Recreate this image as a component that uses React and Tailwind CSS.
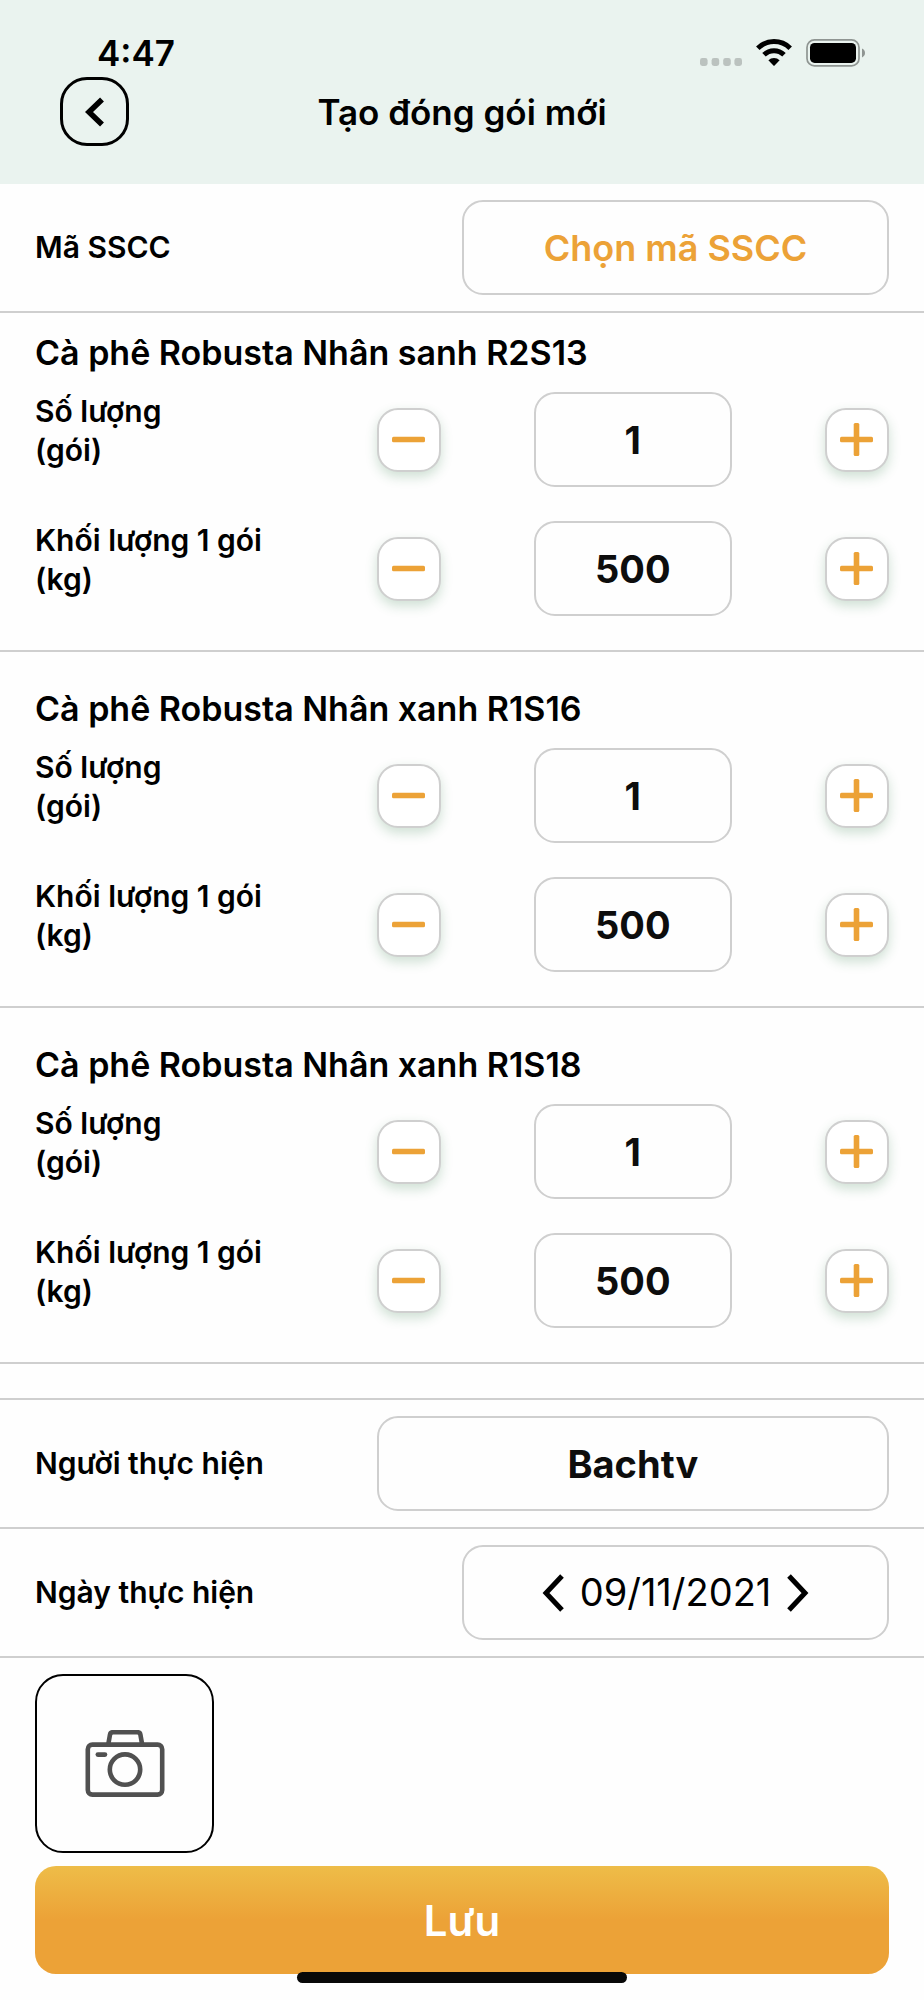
import React, { useState } from "react";

const initialProducts = [
  { id: 1, name: "Cà phê Robusta Nhân sanh R2S13", quantity: 1, weight: 500 },
  { id: 2, name: "Cà phê Robusta Nhân xanh R1S16", quantity: 1, weight: 500 },
  { id: 3, name: "Cà phê Robusta Nhân xanh R1S18", quantity: 1, weight: 500 },
];

// Pad numbers
function pad(n) {
  return n.toString().padStart(2, "0");
}

function formatDate(date) {
  return `${pad(date.getDate())}/${pad(date.getMonth() + 1)}/${date.getFullYear()}`;
}

function StatusBar() {
  return (
    <div className="flex h-10 items-center justify-between pl-[97px] pr-[58px]">
      <span className="text-[35px] leading-10 font-semibold">4:47</span>

      <div className="flex items-center gap-[14px]">
        <svg width="42" height="28" viewBox="0 0 42 28" fill="#bbc2bf">
          <rect x="0" y="19" width="7.6" height="8" rx="2.4" />
          <rect x="11.6" y="19" width="7.6" height="8" rx="2.4" />
          <rect x="23.2" y="19" width="7.6" height="8" rx="2.4" />
          <rect x="34.4" y="19" width="7.6" height="8" rx="2.4" />
        </svg>
        <svg
          width="36"
          height="28"
          viewBox="0 0 36 28"
          fill="none"
          stroke="#000"
          strokeWidth="5"
        >
          <path d="M1.8 9.2A23.2 23.2 0 0 1 34.2 9.2" />
          <path d="M8 15.8A14.4 14.4 0 0 1 28 15.8" />
          <path
            d="M12.4 21.2A8 8 0 0 1 23.6 21.2L18.6 26.4Q18 27 17.4 26.4Z"
            fill="#000"
            stroke="none"
          />
        </svg>
        <svg width="60" height="28" viewBox="0 0 60 28" fill="none">
          <rect
            x="1"
            y="0.9"
            width="52"
            height="26"
            rx="7.5"
            stroke="#8f9592"
            strokeWidth="1.7"
          />
          <rect x="4" y="3.9" width="46" height="20" rx="4.6" fill="#000" />
          <path d="M56 9.6Q59 11 59 14Q59 17 56 18.4Z" fill="#8f9592" />
        </svg>
      </div>
    </div>
  );
}

function Chevron({ right }) {
  return (
    <svg width="22" height="38" viewBox="0 0 22 38" fill="none">
      <path
        d={right ? "M2 2L18 19L2 36" : "M20 2L4 19L20 36"}
        stroke="#000"
        strokeWidth="5"
      />
    </svg>
  );
}

function StepButton({ plus, label, onClick }) {
  return (
    <button
      type="button"
      aria-label={label}
      onClick={onClick}
      className="flex size-16 items-center justify-center rounded-[21px] border-2 border-[#cfcfcf] bg-white shadow-[0_5px_12px_rgba(40,120,65,0.22)]"
    >
      <svg width="33" height="33" viewBox="0 0 33 33" fill="#eca237">
        <rect x="0" y="13.7" width="33" height="5.6" rx="1.5" />
        {plus && <rect x="13.7" y="0" width="5.6" height="33" rx="1.5" />}
      </svg>
    </button>
  );
}

function Stepper({ id, label, unit, value, onChange }) {
  return (
    <div className="flex">
      <label htmlFor={id} className="w-2/5 text-[30px] leading-[39px] font-semibold">
        {label}
        <br />({unit})
      </label>
      <div className="flex w-3/5 items-center justify-between">
        <StepButton
          label={`Giảm ${label}`}
          onClick={() => onChange(Math.max(0, value - 1))}
        />
        <input
          id={id}
          type="text"
          inputMode="numeric"
          value={value}
          onChange={(e) => onChange(Number(e.target.value) || 0)}
          className="h-[95px] w-[198px] rounded-[21px] border-2 border-[#cfcfcf] text-center text-[38px] font-bold text-[#0d0d0d]"
        />
        <StepButton
          plus
          label={`Tăng ${label}`}
          onClick={() => onChange(value + 1)}
        />
      </div>
    </div>
  );
}

export default function App() {
  const [products, setProducts] = useState(initialProducts);
  const [executor, setExecutor] = useState("Bachtv");
  const [date, setDate] = useState(new Date(2021, 10, 9));

  function updateProduct(id, field, value) {
    setProducts(products.map((p) => (p.id === id ? { ...p, [field]: value } : p)));
  }

  function moveDate(days) {
    const next = new Date(date);
    next.setDate(next.getDate() + days);
    setDate(next);
  }

  return (
    <form
      onSubmit={(e) => e.preventDefault()}
      className="relative bg-[#fefefe] pb-[26px] font-['Inter',sans-serif] text-black"
    >
      {/* HEADER */}
      <header className="bg-[#eaf3ef] pt-[33px] pb-[38px]">
        <StatusBar />
        <div className="mt-1 grid grid-cols-[69px_1fr_69px] items-center px-[60px]">
          <button
            type="button"
            aria-label="Quay lại"
            className="flex size-[69px] items-center justify-center rounded-[27px] border-[3px] border-black"
          >
            <svg width="20" height="30" viewBox="0 0 20 30" fill="none">
              <path d="M17 2.5L4 15L17 27.5" stroke="#000" strokeWidth="5.6" />
            </svg>
          </button>
          <h1 className="text-center text-[35px] leading-[44px] font-semibold">
            Tạo đóng gói mới
          </h1>
        </div>
      </header>

      {/* SSCC */}
      <div className="flex items-center border-b-2 border-[#cfcfcf] px-[35px] py-4">
        <span className="w-1/2 text-[30px] leading-[39px] font-semibold">Mã SSCC</span>
        <button
          type="button"
          className="h-[95px] w-1/2 rounded-[21px] border-2 border-[#cfcfcf] text-[36px] font-semibold text-[#eca237]"
        >
          Chọn mã SSCC
        </button>
      </div>

      {/* PRODUCTS */}
      {products.map((p) => (
        <section
          key={p.id}
          className="border-b-2 border-[#cfcfcf] px-[35px] pt-[35px] pb-[34px] first-of-type:pt-[18px]"
        >
          <h2 className="mb-[17px] text-[34px] leading-[44px] font-semibold">{p.name}</h2>
          <div className="flex flex-col gap-[34px]">
            <Stepper
              id={`quantity-${p.id}`}
              label="Số lượng"
              unit="gói"
              value={p.quantity}
              onChange={(v) => updateProduct(p.id, "quantity", v)}
            />
            <Stepper
              id={`weight-${p.id}`}
              label="Khối lượng 1 gói"
              unit="kg"
              value={p.weight}
              onChange={(v) => updateProduct(p.id, "weight", v)}
            />
          </div>
        </section>
      ))}

      {/* EXECUTOR */}
      <div className="mt-[34px] flex items-center border-y-2 border-[#cfcfcf] px-[35px] py-4">
        <label
          htmlFor="executor"
          className="w-2/5 text-[30px] leading-[39px] font-semibold"
        >
          Người thực hiện
        </label>
        <input
          id="executor"
          type="text"
          value={executor}
          onChange={(e) => setExecutor(e.target.value)}
          className="h-[95px] w-3/5 rounded-[21px] border-2 border-[#cfcfcf] text-center text-[38px] font-bold text-[#0d0d0d]"
        />
      </div>

      {/* DATE */}
      <div className="flex items-center border-b-2 border-[#cfcfcf] px-[35px] py-4">
        <span className="w-1/2 text-[30px] leading-[39px] font-semibold">
          Ngày thực hiện
        </span>
        <div className="flex h-[95px] w-1/2 items-center justify-center gap-4 rounded-[21px] border-2 border-[#cfcfcf]">
          <button type="button" aria-label="Ngày trước" onClick={() => moveDate(-1)}>
            <Chevron />
          </button>
          <span className="text-[38px]">{formatDate(date)}</span>
          <button type="button" aria-label="Ngày sau" onClick={() => moveDate(1)}>
            <Chevron right />
          </button>
        </div>
      </div>

      {/* PHOTO + SAVE */}
      <div className="px-[35px] pt-4">
        <button
          type="button"
          aria-label="Chụp ảnh"
          className="flex size-[179px] items-center justify-center rounded-[28px] border-2 border-black"
        >
          <svg
            width="80"
            height="68"
            viewBox="0 0 80 68"
            fill="none"
            stroke="#505050"
            strokeWidth="4.6"
          >
            <rect x="2.8" y="14.6" width="74.4" height="50" rx="4.6" />
            <path d="M23.4 13.7L25 4.6Q25.4 2.2 28 2.2H52.4Q55 2.2 55.4 4.6L57 13.7" />
            <circle cx="40" cy="39.6" r="15.2" />
            <path d="M12.8 24.6H20" strokeLinecap="round" />
          </svg>
        </button>
        <button
          type="submit"
          className="mt-[13px] block h-[108px] w-full rounded-[21px] bg-[linear-gradient(180deg,#eebd48_0%,#eca237_50%,#eca237_100%)] text-[42px] font-semibold text-white"
        >
          Lưu
        </button>
      </div>

      {/* HOME INDICATOR */}
      <div className="absolute bottom-[17px] left-1/2 h-[11px] w-[330px] -translate-x-1/2 rounded-full bg-[#080808]" />
    </form>
  );
}
